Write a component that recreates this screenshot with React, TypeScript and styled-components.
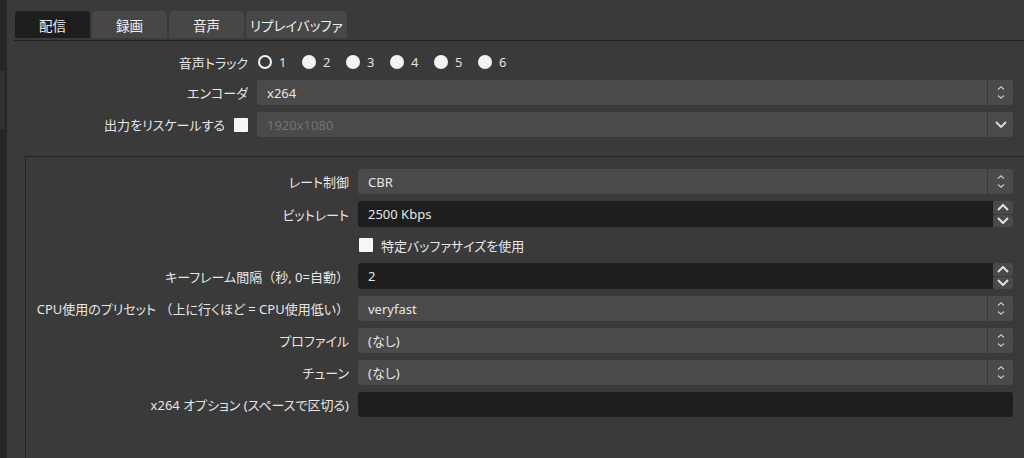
import React from "react";
import styled, { createGlobalStyle } from "styled-components";

const FONT = `"Noto Sans", "Noto Sans CJK JP", sans-serif`;

const GlobalStyle = createGlobalStyle`
  html, body {
    margin: 0;
    padding: 0;
    background: #3a3a3a;
  }
  body {
    font-family: ${FONT};
    font-size: 13px;
    color: #e4e4e4;
    font-feature-settings: "palt";
  }
`;

const Window = styled.div`
  display: flex;
  width: 1024px;
  height: 458px;
  overflow: hidden;
  background: #3a3a3a;
`;

const SideStrip = styled.div`
  flex: 0 0 7px;
  display: flex;
  flex-direction: column;
  padding-top: 71px;
  box-sizing: border-box;
  background: #262626;
`;

const StripHandle = styled.div`
  width: 5px;
  height: 58px;
  background: #323232;
`;

const Main = styled.div`
  flex: 1;
  min-width: 0;
  display: flex;
  flex-direction: column;
  padding-left: 7px;
`;

const TabBar = styled.div`
  display: flex;
  gap: 2px;
  padding: 11px 0 2px 1px;
  border-bottom: 1px solid #1f1f1f;
`;

const Tab = styled.div<{ $active?: boolean }>`
  height: 27px;
  min-width: 75px;
  padding: 0 4px;
  box-sizing: border-box;
  display: flex;
  align-items: center;
  justify-content: center;
  border-radius: 4px 4px 0 0;
  background: ${(p) => (p.$active ? "#1e1e1e" : "#474747")};
  color: #f0f0f0;
  font-size: 13.5px;
`;

const Pane = styled.div`
  flex: 1;
  display: flex;
  flex-direction: column;
`;

const FormGrid = styled.div<{ $labelWidth: number; $rows?: string }>`
  display: grid;
  grid-template-columns: ${(p) => p.$labelWidth}px 1fr;
  ${(p) => (p.$rows ? `grid-template-rows: ${p.$rows};` : "")}
  column-gap: 9px;
  row-gap: 7px;
  align-items: center;
`;

const TopForm = styled(FormGrid)`
  padding: 10px 11px 0 0;
`;

const Label = styled.div`
  display: flex;
  justify-content: flex-end;
  align-items: center;
  gap: 9px;
  min-width: 0;
  overflow: hidden;
  white-space: nowrap;
  color: #e6e6e6;
`;

const Wide = styled.span`
  font-feature-settings: normal;
`;

const GroupBox = styled.div`
  flex: 1;
  margin: 19px -12px -10px 11px;
  padding: 12px 22px 40px 11px;
  border: 1px solid #232323;
`;

const RadioGroup = styled.div`
  display: flex;
  align-items: center;
  padding-left: 1px;
`;

const RadioItem = styled.label`
  flex: 0 0 44px;
  display: flex;
  align-items: center;
  gap: 7px;
  color: #e0e0e0;
`;

const RadioDot = styled.span<{ $checked?: boolean }>`
  width: 14px;
  height: 14px;
  box-sizing: border-box;
  border-radius: 50%;
  ${(p) =>
    p.$checked
      ? "border: 2px solid #f2f2f2; background: transparent;"
      : "background: #f4f4f4;"}
`;

const CheckBox = styled.span`
  flex: 0 0 14px;
  width: 14px;
  height: 14px;
  background: #f6f6f6;
  border-radius: 1px;
`;

const CheckRow = styled.div`
  display: flex;
  align-items: center;
  gap: 8px;
  height: 22px;
  padding-left: 1px;
  color: #e6e6e6;
`;

const Combo = styled.div`
  display: flex;
  height: 25px;
  border-radius: 3px;
  background: #4a4a4a;
  overflow: hidden;
`;

const FieldText = styled.div<{ $disabled?: boolean }>`
  flex: 1;
  display: flex;
  align-items: center;
  padding-left: 10px;
  white-space: nowrap;
  color: ${(p) => (p.$disabled ? "#727272" : "#e6e6e6")};
`;

const ComboButton = styled.div`
  flex: 0 0 26px;
  box-sizing: border-box;
  border-left: 1px solid #383838;
  display: flex;
  align-items: center;
  justify-content: center;
`;

const SpinBox = styled.div`
  display: flex;
  height: 26px;
`;

const SpinField = styled(FieldText)`
  background: #1e1e1e;
  border-radius: 3px 0 0 3px;
`;

const SpinButtons = styled.div`
  flex: 0 0 20px;
  display: flex;
  flex-direction: column;
  gap: 1px;
`;

const SpinButton = styled.div`
  flex: 1;
  display: flex;
  align-items: center;
  justify-content: center;
  background: #4a4a4a;
  border-radius: 3px;
`;

const LineEdit = styled.div`
  height: 25px;
  border-radius: 3px;
  background: #1e1e1e;
`;

const UpDownIcon = () => (
  <svg width="8" height="13" viewBox="0 0 8 13" fill="none">
    <path d="M1 3.5 L4 0.8 L7 3.5" stroke="#c4c4c4" strokeWidth="1.2" />
    <path d="M1 9.5 L4 12.2 L7 9.5" stroke="#c4c4c4" strokeWidth="1.2" />
  </svg>
);

const DownIcon = () => (
  <svg width="12" height="7" viewBox="0 0 12 7" fill="none">
    <path d="M1 1 L6 6 L11 1" stroke="#d6d6d6" strokeWidth="2" />
  </svg>
);

const SpinArrow = ({ up }: { up?: boolean }) => (
  <svg width="12" height="7" viewBox="0 0 12 7" fill="none">
    <path d={up ? "M1 6 L6 1 L11 6" : "M1 1 L6 6 L11 1"} stroke="#e2e2e2" strokeWidth="2" />
  </svg>
);

const ComboBox = ({ value, disabled, single }: { value: string; disabled?: boolean; single?: boolean }) => (
  <Combo>
    <FieldText $disabled={disabled}>{value}</FieldText>
    <ComboButton>{single ? <DownIcon /> : <UpDownIcon />}</ComboButton>
  </Combo>
);

const Spin = ({ value }: { value: string }) => (
  <SpinBox>
    <SpinField>{value}</SpinField>
    <SpinButtons>
      <SpinButton>
        <SpinArrow up />
      </SpinButton>
      <SpinButton>
        <SpinArrow />
      </SpinButton>
    </SpinButtons>
  </SpinBox>
);

const tabs = ["配信", "録画", "音声", "リプレイバッファ"];
const tracks = ["1", "2", "3", "4", "5", "6"];

export default function App() {
  return (
    <>
      <GlobalStyle />
      <Window>
        <SideStrip>
          <StripHandle />
        </SideStrip>
        <Main>
          <TabBar>
            {tabs.map((t, i) => (
              <Tab key={t} $active={i === 0}>
                {t}
              </Tab>
            ))}
          </TabBar>
          <Pane>
            <TopForm $labelWidth={234} $rows="22px 25px 25px">
              <Label>音声トラック</Label>
              <RadioGroup>
                {tracks.map((n, i) => (
                  <RadioItem key={n}>
                    <RadioDot $checked={i === 0} />
                    {n}
                  </RadioItem>
                ))}
              </RadioGroup>

              <Label>エンコーダ</Label>
              <ComboBox value="x264" />

              <Label>
                出力をリスケールする
                <CheckBox />
              </Label>
              <ComboBox value="1920x1080" disabled single />
            </TopForm>

            <GroupBox>
              <FormGrid $labelWidth={312}>
                <Label>レート制御</Label>
                <ComboBox value="CBR" />

                <Label>ビットレート</Label>
                <Spin value="2500 Kbps" />

                <Label />
                <CheckRow>
                  <CheckBox />
                  特定バッファサイズを使用
                </CheckRow>

                <Label>
                  <span>
                    キーフレーム間隔<Wide>（</Wide>秒, 0=自動<Wide>）</Wide>
                  </span>
                </Label>
                <Spin value="2" />

                <Label>
                  <span>
                    CPU使用のプリセット <Wide>（</Wide>上に行くほど = CPU使用低い<Wide>）</Wide>
                  </span>
                </Label>
                <ComboBox value="veryfast" />

                <Label>プロファイル</Label>
                <ComboBox value="(なし)" />

                <Label>チューン</Label>
                <ComboBox value="(なし)" />

                <Label>x264 オプション (スペースで区切る)</Label>
                <LineEdit />
              </FormGrid>
            </GroupBox>
          </Pane>
        </Main>
      </Window>
    </>
  );
}
